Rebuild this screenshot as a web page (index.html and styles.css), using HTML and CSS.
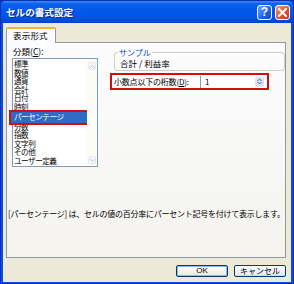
FILE: index.html
```html
<!DOCTYPE html>
<html lang="ja">
<head>
<meta charset="utf-8">
<link rel="stylesheet" href="styles.css">
</head>
<body>
<div class="window">
  <div class="titlebar">
    <span class="title">セルの書式設定</span>
    <div class="tbtns">
      <span class="tbtn help">?</span>
      <span class="tbtn close"><svg width="9" height="9" viewBox="0 0 9 9"><path d="M1 1L8 8M8 1L1 8" stroke="#fff" stroke-width="2" stroke-linecap="square"/></svg></span>
    </div>
  </div>
  <div class="client">
    <div class="tabs"><span class="tab">表示形式</span></div>
    <div class="panel">
      <div class="cols">
        <div class="leftcol">
          <div class="lbl">分類(<u>C</u>):</div>
          <div class="listbox">
            <ul class="items">
              <li>標準</li>
              <li>数値</li>
              <li>通貨</li>
              <li>会計</li>
              <li>日付</li>
              <li>時刻</li>
              <li class="sel">パーセンテージ</li>
              <li>分数</li>
              <li>指数</li>
              <li>文字列</li>
              <li>その他</li>
              <li>ユーザー定義</li>
            </ul>
            <div class="vscroll">
              <span class="arr"><svg width="5" height="3" viewBox="0 0 5 3"><path d="M0 3L2.5 0.5L5 3" fill="none" stroke="#c4cbd8" stroke-width="1"/></svg></span>
              <span class="arr"><svg width="5" height="3" viewBox="0 0 5 3"><path d="M0 0L2.5 2.5L5 0" fill="none" stroke="#c4cbd8" stroke-width="1"/></svg></span>
            </div>
          </div>
        </div>
        <div class="rightcol">
          <fieldset class="sample">
            <legend>サンプル</legend>
            <div class="sampletext">合計 / 利益率</div>
          </fieldset>
          <div class="decimals">
            <span class="dlbl">小数点以下の桁数(<u>D</u>):</span>
            <div class="spin">
              <span class="val">1</span>
              <span class="spinbtn"><svg width="5" height="7" viewBox="0 0 5 7"><path d="M0.5 3L2.5 1L4.5 3M0.5 4L2.5 6L4.5 4" fill="none" stroke="#4d6185" stroke-width="1"/></svg></span>
            </div>
          </div>
        </div>
      </div>
      <p class="desc">[パーセンテージ] は、セルの値の百分率にパーセント記号を付けて表示します。</p>
    </div>
    <div class="buttons">
      <span class="btn ok">OK</span>
      <span class="btn">キャンセル</span>
    </div>
  </div>
</div>
</body>
</html>
```

FILE: styles.css
```css
* { box-sizing: border-box; }
html, body { margin: 0; padding: 0; }
body {
  width: 294px;
  height: 284px;
  font-family: "Noto Sans CJK JP", "Noto Sans", sans-serif;
  font-size: 8px;
  color: #000;
  overflow: hidden;
}
.window {
  width: 294px;
  height: 284px;
  background: #0a4ee0;
  border: 1px solid #0831b0;
  padding: 0 2px 2px 2px;
  display: flex;
  flex-direction: column;
}
.titlebar {
  height: 22px;
  flex: none;
  margin: 0 -2px;
  padding: 0 3px 0 5px;
  display: flex;
  align-items: center;
  justify-content: space-between;
  background: linear-gradient(#3b8cf8 0, #0a61ee 3px, #0058ea 45%, #0052e4 80%, #0040c8 100%);
  border-radius: 5px 5px 0 0;
}
.title {
  color: #fff;
  font-weight: bold;
  font-size: 9.6px;
  text-shadow: 1px 1px 0 #0a2a90;
}
.tbtns { display: flex; gap: 3px; }
.tbtn {
  width: 15px;
  height: 15px;
  border: 1px solid #fff;
  border-radius: 3px;
  display: flex;
  align-items: center;
  justify-content: center;
  color: #fff;
  font-family: "Liberation Sans", sans-serif;
  font-weight: bold;
  font-size: 12px;
}
.help { background: linear-gradient(135deg, #6aa2ff, #1f5fe8 60%, #1448d0); }
.close { background: linear-gradient(135deg, #f19a7c, #e2552f 55%, #c83a18); }
.client {
  flex: 1;
  background: #ece9d8;
  padding: 4px 5px 5px 3px;
  display: flex;
  flex-direction: column;
}
.tabs { display: flex; height: 15px; position: relative; z-index: 1; }
.tab {
  width: 50px;
  height: 16px;
  background: #fcfcfe;
  border: 1px solid #919b9c;
  border-bottom: none;
  border-top: 2px solid #f4b43a;
  border-radius: 2px 2px 0 0;
  padding-left: 6px;
  line-height: 13px;
  font-size: 8.5px;
  letter-spacing: 0.2px;
}
.panel {
  height: 216px;
  flex: none;
  background: linear-gradient(#fcfcfe, #f4f3ee);
  border: 1px solid #919b9c;
  padding: 3px 0 0 5px;
  display: flex;
  flex-direction: column;
}
.cols { display: flex; }
.leftcol { width: 86px; flex: none; }
.lbl { height: 12px; line-height: 11px; padding-left: 1px; font-size: 8.5px; }
.listbox {
  width: 86px;
  height: 109px;
  border: 1px solid #7f9db9;
  background: #fff;
  display: flex;
}
.items {
  list-style: none;
  margin: 0;
  padding: 1px 0 0 0;
  flex: 1;
  font-size: 7.6px;
  line-height: 8.6px;
  letter-spacing: -0.5px;
}
.items li { height: 8.6px; padding-left: 1px; white-space: nowrap; }
.items li.sel {
  height: 11px;
  line-height: 10px;
  margin: 0 0 0 -2px;
  background: #316ac5;
  color: #fff;
  outline: 2px solid #d01010;
  padding-left: 3px;
}
.vscroll {
  width: 10px;
  flex: none;
  background: #fbfbf8;
  display: flex;
  flex-direction: column;
  justify-content: space-between;
  padding: 3px 0 2px;
}
.arr {
  height: 8px;
  margin: 0 1px;
  border: 1px solid #e6e9ef;
  border-radius: 2px;
  background: #f6f7fa;
  display: flex;
  align-items: center;
  justify-content: center;
}
.rightcol { flex: 1; padding-left: 14px; }
.sample {
  margin: 2px 0 0 2px;
  padding: 0 0 3px 5px;
  border: 1px solid #d0d0bf;
  border-radius: 3px;
  height: 23px;
}
.sample legend {
  color: #0046d5;
  padding: 0 1px;
  margin-left: -2px;
  line-height: 9px;
}
.sampletext { line-height: 10px; padding-top: 1px; font-size: 8.5px; }
.decimals {
  margin-top: 4px;
  margin-right: 18px;
  height: 13px;
  outline: 2px solid #d01010;
  display: flex;
  align-items: center;
  background: #fcfcfc;
}
.dlbl { width: 88px; flex: none; padding-left: 2px; white-space: nowrap; letter-spacing: -0.2px; }
.spin {
  flex: 1;
  height: 12px;
  border-left: 1px solid #7f9db9;
  display: flex;
  align-items: center;
  justify-content: space-between;
  padding: 0 3px 0 4px;
  background: #fff;
}
.val { line-height: 10px; }
.spinbtn {
  width: 9px;
  height: 10px;
  background: #d9e3f5;
  border-radius: 2px;
  display: flex;
  align-items: center;
  justify-content: center;
}
.desc {
  margin: auto 0 38px -4px;
  white-space: nowrap;
  font-size: 8px;
  letter-spacing: -0.25px;
}
.buttons {
  display: flex;
  justify-content: flex-end;
  gap: 6px;
  margin-top: 7px;
}
.btn {
  width: 52px;
  height: 12px;
  border: 1px solid #003c74;
  border-radius: 2px;
  background: linear-gradient(#fff, #ecebe6 85%, #d6d0c5);
  display: flex;
  align-items: center;
  justify-content: center;
  font-size: 8px;
  line-height: 10px;
}
.btn.ok { font-family: "Liberation Sans", sans-serif; box-shadow: inset 0 0 0 1px #98b4e8; }
```
